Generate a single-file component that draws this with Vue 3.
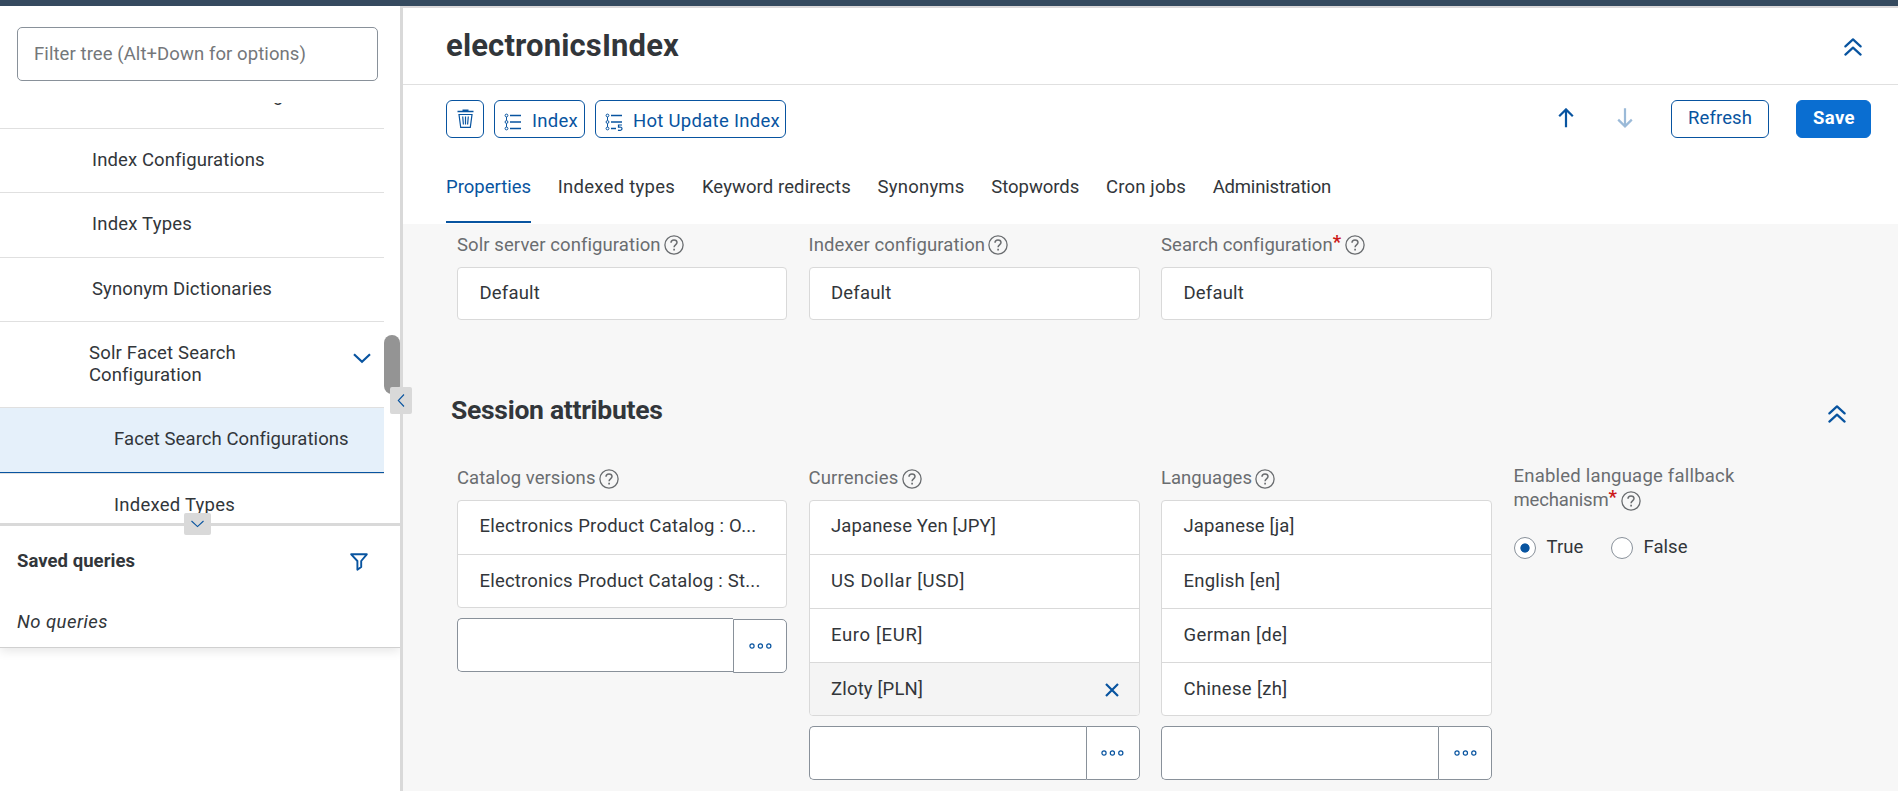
<script setup>
import { h } from 'vue'

// Spreads the letters of a label so that it takes the given width in pixels.
const vFit = {
  mounted(el, { value }) {
    const natural = el.getBoundingClientRect().width
    el.style.letterSpacing = (value - natural) / el.textContent.length + 'px'
  }
}

const HelpIcon = () =>
  h('svg', { class: 'help', width: 20, height: 20, viewBox: '0 0 20 20', fill: 'none', stroke: '#6a6d70' }, [
    h('circle', { cx: 10, cy: 10, r: 9.1, 'stroke-width': 1.3 }),
    h('path', { d: 'M7 7.8C7 5.9 8.2 5 10 5s3 1 3 2.6c0 1.3-.8 1.8-1.7 2.5-.8.6-1.2 1-1.2 2.2', 'stroke-width': 1.5 }),
    h('path', { d: 'M10.1 13.7v1.8', 'stroke-width': 1.7 })
  ])

const CollapseIcon = () =>
  h('svg', { width: 18, height: 18, viewBox: '0 0 18 18', fill: 'none', stroke: '#0854a0', 'stroke-width': 2.2, 'stroke-linecap': 'round', 'stroke-linejoin': 'round' }, [
    h('path', { d: 'M1.4 8.4 9 1.4l7.6 7M1.4 16.6 9 9.6l7.6 7' })
  ])

const tree = [
  { label: 'Index Configurations', w: 172, cls: 'r1' },
  { label: 'Index Types', w: 100, cls: 'r2' },
  { label: 'Synonym Dictionaries', w: 180, cls: 'r3' }
]

const tabs = [
  { label: 'Properties', w: 85, active: true },
  { label: 'Indexed types', w: 117.5 },
  { label: 'Keyword redirects', w: 149 },
  { label: 'Synonyms', w: 87 },
  { label: 'Stopwords', w: 88 },
  { label: 'Cron jobs', w: 80 },
  { label: 'Administration', w: 118.5 }
]

const configs = [
  { label: 'Solr server configuration', w: 203 },
  { label: 'Indexer configuration', w: 176 },
  { label: 'Search configuration', w: 171, required: true }
]

const lists = [
  {
    label: 'Catalog versions', w: 138.5, shifted: true,
    items: [
      { t: 'Electronics Product Catalog : O...', w: 277 },
      { t: 'Electronics Product Catalog : St...', w: 281 }
    ]
  },
  {
    label: 'Currencies', w: 90,
    items: [
      { t: 'Japanese Yen [JPY]', w: 165 },
      { t: 'US Dollar [USD]', w: 134 },
      { t: 'Euro [EUR]', w: 92 },
      { t: 'Zloty [PLN]', w: 92, hover: true }
    ]
  },
  {
    label: 'Languages', w: 91,
    items: [
      { t: 'Japanese [ja]', w: 111 },
      { t: 'English [en]', w: 97 },
      { t: 'German [de]', w: 104 },
      { t: 'Chinese [zh]', w: 104 }
    ]
  }
]
</script>

<template>
  <div class="app">
    <div class="shell"></div>
    <div class="body">
      <aside class="side">
        <div class="filter"><span v-fit="272" class="t">Filter tree (Alt+Down for options)</span></div>
        <div class="tree">
          <div class="row r0"><span class="t">g</span></div>
          <div v-for="n in tree" :key="n.label" class="row" :class="n.cls">
            <span v-fit="n.w" class="t">{{ n.label }}</span>
          </div>
          <div class="row parent">
            <div class="two">
              <span v-fit="147" class="t">Solr Facet Search</span>
              <span v-fit="112" class="t">Configuration</span>
            </div>
            <svg width="18" height="11" viewBox="0 0 18 11" fill="none" stroke="#0854a0" stroke-width="2.2"><path d="M1 1.3 9 8.800 17 1.3" /></svg>
          </div>
          <div class="row leaf selected"><span v-fit="234" class="t">Facet Search Configurations</span></div>
          <div class="row leaf last"><span v-fit="121" class="t">Indexed Types</span></div>
          <div class="thumb"></div>
        </div>
        <div class="hsplit">
          <div class="hgrip">
            <svg width="13" height="8" viewBox="0 0 13 8" fill="none" stroke="#0854a0" stroke-width="1.1"><path d="M.5 1 6.5 6.6 12.5 1" /></svg>
          </div>
        </div>
        <section class="saved">
          <div class="savedhead">
            <span v-fit="118" class="t strong">Saved queries</span>
            <svg width="18" height="18" viewBox="0 0 18 18" fill="none" stroke="#0854a0" stroke-width="1.9" stroke-linejoin="round"><path d="M1.2 1.3h15.6L11.2 8v6L7.4 16.7V8z" /></svg>
          </div>
          <div class="none"><span v-fit="91" class="t italic">No queries</span></div>
        </section>
      </aside>
      <div class="vsplit">
        <div class="vgrip">
          <svg width="8" height="13" viewBox="0 0 8 13" fill="none" stroke="#0854a0" stroke-width="1.1"><path d="M7 .5 1.3 6.5 7 12.5" /></svg>
        </div>
      </div>
      <main class="main">
        <header class="title">
          <h1><span v-fit="233" class="t">electronicsIndex</span></h1>
          <CollapseIcon />
        </header>
        <div class="toolbar">
          <div class="group">
            <button class="btn del">
              <svg width="17" height="20" viewBox="0 0 17 20" fill="none" stroke="#0854a0"><path d="M.5 2.5h16M5.5 1.2h6" stroke-width="1.4" /><path d="M2 5.5 3.7 18.4h9.6L15 5.5zM5.7 7.5l.7 8M8.5 7.5v8M11.3 7.5l-.7 8" stroke-width="1.2" /></svg>
            </button>
            <button class="btn idx">
              <svg width="18" height="18" viewBox="0 0 18 18" fill="none" stroke="#0854a0"><circle cx="2.5" cy="2.5" r="1.4" /><circle cx="2.5" cy="9" r="1.4" /><circle cx="2.5" cy="15.5" r="1.4" /><path d="M2.5 4v3.5M2.5 10.5v3.5" /><path d="M6 2.5h11M6 9h11M6 15.5h11" stroke-width="1.5" /></svg>
              <span v-fit="46" class="t">Index</span>
            </button>
            <button class="btn hot">
              <svg width="18" height="18" viewBox="0 0 18 18" fill="none" stroke="#0854a0"><circle cx="2.5" cy="2.5" r="1.4" /><circle cx="2.5" cy="9" r="1.4" /><circle cx="2.5" cy="15.5" r="1.4" /><path d="M2.5 4v3.5M2.5 10.5v3.5" /><path d="M6 2.5h11M6 9h11M6 15.5h5" stroke-width="1.4" /><path d="M17 12h-3.5v2.2c2-.4 3.500.2 3.500 1.600 0 1.500-2 2-4 1.300" stroke-width="1.2" /></svg>
              <span v-fit="147" class="t">Hot Update Index</span>
            </button>
          </div>
          <div class="group right">
            <svg class="up" width="16" height="20" viewBox="0 0 16 20" fill="none" stroke="#0854a0" stroke-width="2.2"><path d="M8 19.3V1.6M1.2 8.2 8 1.4l6.8 6.8" /></svg>
            <svg class="down" width="16" height="20" viewBox="0 0 16 20" fill="none" stroke="#0854a0" stroke-width="2.2"><path d="M8 .3V18M1.2 11.6 8 18.4l6.8-6.8" /></svg>
            <button class="btn refresh"><span v-fit="64" class="t">Refresh</span></button>
            <button class="btn save"><span v-fit="42" class="t">Save</span></button>
          </div>
        </div>
        <nav class="tabs">
          <div v-for="t in tabs" :key="t.label" class="tab" :class="{ active: t.active }">
            <span v-fit="t.w" class="t">{{ t.label }}</span>
          </div>
        </nav>
        <div class="content">
          <div class="grid">
            <div v-for="c in configs" :key="c.label" class="cell">
              <div class="label"><span v-fit="c.w" class="t">{{ c.label }}</span><span v-if="c.required" class="req">*</span><HelpIcon /></div>
              <div class="list"><div class="item"><span v-fit="60.5" class="t">Default</span></div></div>
            </div>
          </div>
          <div class="section">
            <h2><span v-fit="211.5" class="t">Session attributes</span></h2>
            <CollapseIcon />
          </div>
          <div class="grid lower">
            <div v-for="l in lists" :key="l.label" class="cell">
              <div class="label"><span v-fit="l.w" class="t">{{ l.label }}</span><HelpIcon /></div>
              <div class="list">
                <div v-for="i in l.items" :key="i.t" class="item" :class="{ hover: i.hover }">
                  <span v-fit="i.w" class="t">{{ i.t }}</span>
                  <svg v-if="i.hover" width="14" height="14" viewBox="0 0 14 14" stroke="#0854a0" stroke-width="2.2"><path d="M1 1l12 12M13 1 1 13" /></svg>
                </div>
              </div>
              <div class="picker">
                <div class="input"></div>
                <div class="more" :class="{ shifted: l.shifted }">
                  <svg width="23" height="6" viewBox="0 0 23 6" fill="none" stroke="#0854a0" stroke-width="1.2"><circle cx="3" cy="3" r="2.1" /><circle cx="11.4" cy="3" r="2.1" /><circle cx="19.8" cy="3" r="2.1" /></svg>
                </div>
              </div>
            </div>
            <div class="cell fallback">
              <div class="flabel"><span v-fit="221" class="t">Enabled language fallback</span></div>
              <div class="flabel"><span v-fit="95" class="t">mechanism</span><span class="req">*</span><HelpIcon /></div>
              <div class="radios">
                <span class="radio on"></span><span v-fit="37" class="t">True</span>
                <span class="radio off"></span><span v-fit="44" class="t">False</span>
              </div>
            </div>
          </div>
        </div>
      </main>
    </div>
  </div>
</template>

<style>
body { margin: 0; overflow: hidden; }
</style>

<style scoped>
.app { width: 1898px; height: 791px; overflow: hidden; display: flex; flex-direction: column; background: #fff; color: #32363a; font: 18.5px/22px Roboto, "Liberation Sans", sans-serif; }
.app * { box-sizing: border-box; }
.t { display: inline-block; white-space: nowrap; }
svg { display: block; flex: none; }
.shell { height: 6px; background: #354a5f; flex: none; }
.body { flex: 1; display: flex; min-height: 0; }

.side { width: 400px; display: flex; flex-direction: column; }
.filter { width: 361px; height: 54px; margin: 21px 0 0 17px; border: 1px solid #89919a; border-radius: 5px; padding: 15px 0 0 16px; color: #74777a; flex: none; }
.tree { margin-top: 22px; height: 420px; overflow: hidden; position: relative; flex: none; }
.row { width: 384px; border-bottom: 1px solid #e0e0e0; padding-left: 92px; }
.r0 { height: 26px; padding-left: 273px; display: flex; align-items: flex-start; }
.r0 .t { margin-top: -19px; }
.r1 { height: 64px; padding-top: 20px; }
.r2 { height: 65px; padding-top: 20px; }
.r3 { height: 64px; padding-top: 20px; }
.parent { height: 86px; padding: 20px 13px 0 89px; display: flex; justify-content: space-between; }
.parent svg { margin-top: 11px; }
.two { display: flex; flex-direction: column; align-items: flex-start; }
.leaf { padding-left: 114px; }
.selected { height: 66px; padding-top: 20px; background: #e5f0fa; box-shadow: inset 0 -1px #0854a0; }
.last { height: 60px; padding-top: 20px; border: 0; }
.thumb { position: absolute; left: 384px; top: 232px; width: 16px; height: 59px; border-radius: 8px; background: #949494; }
.hsplit { height: 3px; background: #d9d9d9; position: relative; flex: none; }
.hgrip { position: absolute; left: 184px; top: -10px; width: 27px; height: 22px; border-radius: 2px; background: #d9d9d9; display: flex; align-items: center; justify-content: center; }
.saved { height: 122px; border-bottom: 1px solid #d0d0d0; box-shadow: 0 3px 10px rgba(0,0,0,.1); clip-path: inset(0 0 -20px 0); }
.savedhead { display: flex; justify-content: space-between; padding: 24px 32px 0 17px; height: 60px; }
.savedhead svg { margin-top: 3px; }
.strong { font-weight: 700; }
.none { padding: 25px 0 0 17px; }
.italic { font-style: italic; }
.vsplit { width: 3px; background: #d9d9d9; position: relative; z-index: 2; flex: none; }
.vgrip { position: absolute; left: -10px; top: 381px; width: 22px; height: 27px; border-radius: 2px; background: #d9d9d9; display: flex; align-items: center; justify-content: center; }

.main { flex: 1; display: flex; flex-direction: column; min-width: 0; border-top: 2px solid #dcd9da; }
.title { height: 77px; border-bottom: 1px solid #e0e0e0; display: flex; justify-content: space-between; padding: 0 36px 0 43px; flex: none; }
.title > svg { margin-top: 30px; }
h1, h2 { margin: 0; font-weight: 700; }
h1 { font-size: 31px; line-height: 40px; padding-top: 18px; }
.toolbar { height: 75px; padding: 15px 27px 0 43px; display: flex; justify-content: space-between; flex: none; }
.group { display: flex; align-items: flex-start; }
.btn { font: inherit; height: 38px; border: 1px solid #0854a0; border-radius: 6px; background: #fff; color: #0854a0; padding: 0; display: flex; }
.del { width: 38px; padding: 8px 0 0 10px; }
.idx { width: 91px; margin-left: 10px; padding: 9px 0 0 9px; }
.idx svg, .hot svg { margin-top: 3px; margin-right: 10px; }
.hot { width: 191px; margin-left: 10px; padding: 9px 0 0 9px; }
.up { margin: 8px 43px 0 0; }
.down { margin: 8px 38px 0 0; opacity: .4; }
.refresh { width: 98px; padding: 6px 0 0 16px; margin-right: 27px; }
.save { width: 75px; padding: 6px 0 0 16px; border-color: #0a6ed1; background: #0a6ed1; color: #fff; font-weight: 700; }
.tabs { height: 64px; display: flex; padding-left: 43px; gap: 26.7px; flex: none; }
.tab { height: 63px; padding-top: 16px; }
.active { color: #0854a0; border-bottom: 2px solid #0854a0; }

.content { flex: 1; background: #f7f7f7; padding: 0 50px 0 54px; min-height: 0; overflow: hidden; }
.grid { display: grid; grid-template-columns: 330px 331px 331px 300px; column-gap: 21.5px; align-items: start; }
.label { height: 43px; padding-top: 10px; display: flex; color: #6a6d70; }
.help { margin: 1px 0 0 3px; }
.req { color: #cc1919; font-weight: 700; width: 9px; line-height: 20px; margin-top: -2px; }
.list { background: #fff; border: 1px solid #d9d9d9; border-radius: 4px; overflow: hidden; }
.item { height: 54px; padding: 15px 0 0 21.5px; display: flex; justify-content: space-between; border-top: 1px solid #d9d9d9; }
.item:first-child { border-top: 0; height: 51px; padding-top: 14px; }
.lower .item:first-child { height: 53px; padding-top: 14px; }
.lower .item:last-child { height: 53px; }
.hover { background: #f4f4f4; }
.hover svg { margin: 5px 20px 0 0; }
.section { display: flex; justify-content: space-between; margin: 70px 2px 0 -6px; height: 65px; }
.section > svg { margin-top: 15px; }
h2 { font-size: 26.5px; line-height: 36px; padding-top: 2px; }
.lower .label { height: 45px; padding-top: 12px; }
.lower .help { margin-top: 2px; }
.picker { display: flex; height: 54px; margin-top: 10px; }
.input { flex: 1; background: #fff; border: 1px solid #89919a; border-right: 0; border-radius: 5px 0 0 5px; }
.more { width: 54px; background: #fff; border: 1px solid #89919a; border-radius: 0 5px 5px 0; display: flex; align-items: center; justify-content: center; }
.more svg { margin-top: -1px; }
.shifted { margin: 1px 0 -1px; }
.fallback { padding-top: 10px; color: #6a6d70; }
.flabel { height: 24px; display: flex; }
.fallback .flabel .help { margin-top: 2px; }
.radios { display: flex; margin-top: 23px; color: #32363a; }
.radio { width: 22px; height: 22px; border: 1px solid #89919a; border-radius: 50%; background: #fff; margin: 1px 11px 0 0; flex: none; }
.on { background: radial-gradient(circle, #0854a0 4.2px, #fff 5px); }
.off { margin-left: 27px; }
</style>
